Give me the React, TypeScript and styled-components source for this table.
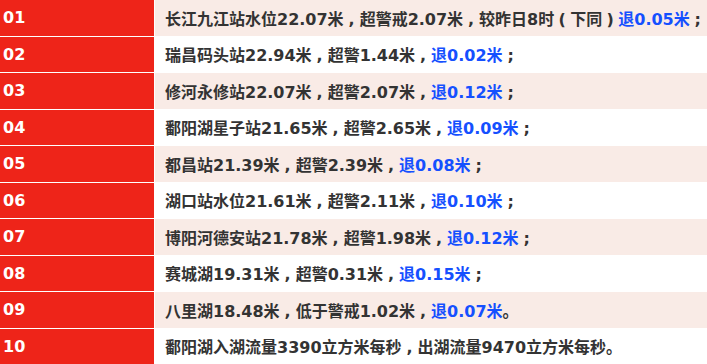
import { Fragment } from 'react';
import styled, { createGlobalStyle } from 'styled-components';

const GlobalStyle = createGlobalStyle`
    html, body {
        margin: 0;
        padding: 0;
        background: #ffffff;
    }
`;

const Board = styled.div`
    display: grid;
    grid-template-columns: 154px 1fr;
    grid-auto-rows: 1fr;
    column-gap: 1px;
    row-gap: 1px;
    width: 707px;
    height: 364px;
    background: #ffffff;
    font-family: 'DejaVu Sans', 'Noto Sans CJK SC', sans-serif;
    font-weight: bold;
    font-size: 16px;
`;

const Index = styled.div`
    display: flex;
    align-items: center;
    padding-left: 3px;
    background: #ee2419;
    color: #ffffff;
`;

const Text = styled.div<{ $shaded: boolean }>`
    display: flex;
    align-items: center;
    padding-left: 10px;
    white-space: pre;
    overflow: hidden;
    background: ${({ $shaded }) => ($shaded ? '#f9ebe6' : '#ffffff')};
    color: #333333;
`;

const Fall = styled.span`
    color: #1550ff;
`;

// full-width punctuation drawn centred in its em box, as in the source page
const Punct = styled.span`
    display: inline-block;
    width: 1em;
    text-align: center;
`;

const centred: Record<string, string> = { '，': ',', '；': ';', '（': '(', '）': ')' };

const withPunct = (s: string) =>
    s.split(/([，；（）])/).map((part, i) =>
        centred[part] ? <Punct key={i}>{centred[part]}</Punct> : part
    );

interface Item {
    text: string;
    fall?: string;
    end: string;
}

const items: Item[] = [
    { text: '长江九江站水位22.07米，超警戒2.07米，较昨日8时（下同）', fall: '退0.05米', end: '；' },
    { text: '瑞昌码头站22.94米，超警1.44米，', fall: '退0.02米', end: '；' },
    { text: '修河永修站22.07米，超警2.07米，', fall: '退0.12米', end: '；' },
    { text: '鄱阳湖星子站21.65米，超警2.65米，', fall: '退0.09米', end: '；' },
    { text: '都昌站21.39米，超警2.39米，', fall: '退0.08米', end: '；' },
    { text: '湖口站水位21.61米，超警2.11米，', fall: '退0.10米', end: '；' },
    { text: '博阳河德安站21.78米，超警1.98米，', fall: '退0.12米', end: '；' },
    { text: '赛城湖19.31米，超警0.31米，', fall: '退0.15米', end: '；' },
    { text: '八里湖18.48米，低于警戒1.02米，', fall: '退0.07米', end: '。' },
    { text: '鄱阳湖入湖流量3390立方米每秒，出湖流量9470立方米每秒', end: '。' },
];

export default function App() {
    return (
        <>
            <GlobalStyle />
            <Board>
                {items.map((item, i) => (
                    <Fragment key={i}>
                        <Index>{String(i + 1).padStart(2, '0')}</Index>
                        <Text $shaded={i % 2 === 0}>
                            <span>
                                {withPunct(item.text)}
                                {item.fall && <Fall>{item.fall}</Fall>}
                                {withPunct(item.end)}
                            </span>
                        </Text>
                    </Fragment>
                ))}
            </Board>
        </>
    );
}
